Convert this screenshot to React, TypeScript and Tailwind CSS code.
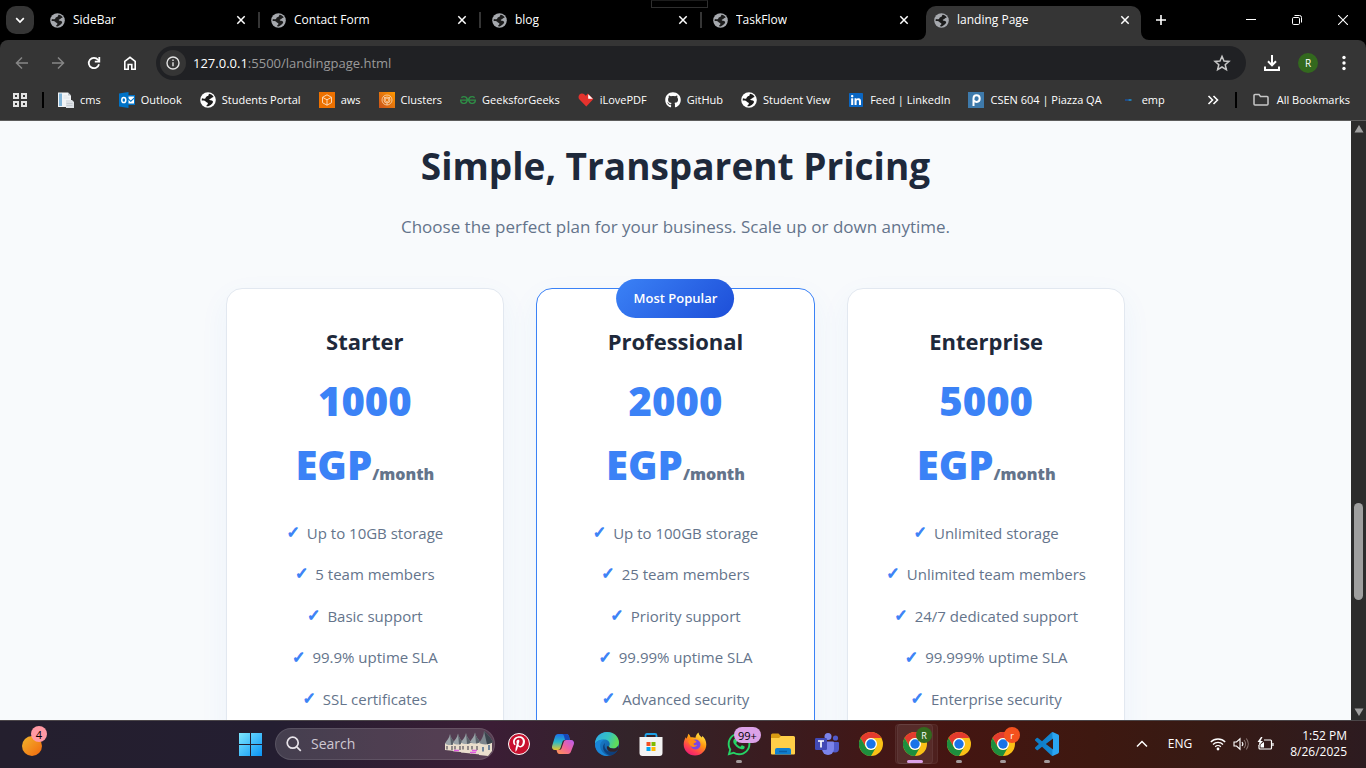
import React from "react";
import { FaGithub, FaLinkedin, FaPinterestP, FaWhatsapp } from "react-icons/fa";
import { SiGeeksforgeeks } from "react-icons/si";

type IconProps = { className?: string };

/* ---------- shared glyphs ---------- */

function Globe({ className }: IconProps) {
  return (
    <svg viewBox="0 0 16 16" className={className} aria-hidden="true">
      <circle cx="8" cy="8" r="7.8" fill="currentColor" />
      <path
        className="fill-[#1c1c1c]"
        d="M9.300 1.800c1.900.3 3.500 1.500 4.300 3.100-1.200.1-1.700.6-2.300 1.300-.4.600-1.300.5-1.900 1.100-.3.400.1.900.7.900 1.200 0 2.200.1 2.700 1 .4.700 0 1.500-.6 2.200-.9 1-2 1.900-3.500 2.700-.9.300-1.700.200-2.200.1-.2-.7.4-1.300 1-1.700.7-.5.5-1.500-.300-1.900-1-.4-1.500-.9-2-1.600-.7-.5-2-.5-3.500-.6 0-.8.100-1.500.3-2.100 1.300.6 2.500.6 3.300.100.5-.4.3-1.200.9-1.700.7-.5 1.700-.3 2.100-1 .3-.6.1-1.400 1-1.900z"
      />
    </svg>
  );
}

function Close({ className }: IconProps) {
  return (
    <svg viewBox="0 0 10 10" className={className} fill="none" stroke="currentColor" strokeWidth="1.5" aria-hidden="true">
      <path d="M1.300 1.300l7.400 7.400M8.700 1.300L1.300 8.700" />
    </svg>
  );
}

/* ---------- bookmark icons ---------- */

function CmsIcon() {
  return (
    <svg viewBox="0 0 16 16" className="size-4" aria-hidden="true">
      <path d="M0 .5h10l3 3V15H0z" fill="#f2f4f6" />
      <path d="M1 1.500h3V14H1z" fill="#7fb2d6" />
      <path d="M10 .5v3h3z" fill="#b9c0c7" />
      <path d="M5.500 4h4M5.500 6h6" stroke="#dfe3e7" />
      <path d="M8 8h6l2 2v6H8z" fill="#dde1e5" />
      <path d="M8.500 11.500h6M8.500 13.500h6" stroke="#c5cbd1" />
    </svg>
  );
}

function OutlookIcon() {
  return (
    <svg viewBox="0 0 16 16" className="size-4" aria-hidden="true">
      <path d="M8 3h8v10H8z" fill="#0072c6" />
      <path d="M9 4.500h6v1L11.800 8.500 9 6z" fill="#fff" />
      <path d="M9 7.500l2.800 2.500L15 7v4.500H9z" fill="#fff" />
      <path d="M0 1.500L9.500 0v16L0 14.500z" fill="#0072c6" />
      <ellipse cx="4.800" cy="8" rx="2" ry="2.600" fill="none" stroke="#fff" strokeWidth="1.500" />
    </svg>
  );
}

function AwsIcon() {
  return (
    <svg viewBox="0 0 16 16" className="size-4" fill="none" stroke="#ffe3c7" strokeWidth=".9" aria-hidden="true">
      <path d="M0 0h16v16H0z" fill="#ed7100" stroke="none" />
      <path d="M8 2.800l4.500 2.500v5.400L8 13.200l-4.500-2.500V5.300zM3.500 5.300L8 7.800l4.500-2.500M8 7.800v5.400" />
    </svg>
  );
}

function ClustersIcon() {
  return (
    <svg viewBox="0 0 16 16" className="size-4" fill="none" stroke="#ffe3c7" strokeWidth=".7" aria-hidden="true">
      <defs>
        <linearGradient id="clusters" x1="0" y1="1" x2="1" y2="0">
          <stop stopColor="#c8511b" />
          <stop offset="1" stopColor="#ff9900" />
        </linearGradient>
      </defs>
      <path d="M0 0h16v16H0z" fill="url(#clusters)" stroke="none" />
      <circle cx="8" cy="8" r="5" />
      <circle cx="8" cy="8" r="3" />
      <path d="M4.500 4.500l2 2M11.500 4.500l-2 2M8 13v-2.500M8 6l1.800 1v2L8 10 6.200 9V7z" />
    </svg>
  );
}

function HeartIcon() {
  return (
    <svg viewBox="0 0 16 16" className="size-4" aria-hidden="true">
      <path d="M8.300 14.500L1.500 7.600C.2 6.200.2 3.900 1.500 2.500s3.600-1.400 5 0l1.300 1.200 2-2.300 5.600 5.600z" fill="#e5322d" />
      <path d="M10.200 2.300l4.600 4.500h-4.600z" fill="#fff" />
    </svg>
  );
}

function PiazzaIcon() {
  return (
    <svg viewBox="0 0 16 16" className="size-4" aria-hidden="true">
      <path d="M0 0h16v16H0z" fill="#3e7aab" />
      <path d="M5.500 14V6.500C5.500 4.500 6.700 3.200 8.500 3.200s3.200 1.400 3.200 3.300-1.300 3.400-3 3.400c-1.200 0-2-.5-2.600-1.200" fill="none" stroke="#fff" strokeWidth="2" />
    </svg>
  );
}

function DashIcon() {
  return (
    <svg viewBox="0 0 16 16" className="size-4" aria-hidden="true">
      <path d="M5 8h3.500" stroke="#1d4f9c" strokeWidth="1.600" />
      <path d="M8.500 8h3" stroke="#1f8fd0" strokeWidth="1.600" />
    </svg>
  );
}

function LinkedInIcon() {
  return (
    <span className="flex size-4 items-center justify-center bg-[linear-gradient(#fff,#fff)] bg-[length:10px_10px] bg-center bg-no-repeat">
      <FaLinkedin className="size-4 text-[#0a66c2]" />
    </span>
  );
}

const bookmarks: { label: string; icon: React.ReactNode }[] = [
  { label: "cms", icon: <CmsIcon /> },
  { label: "Outlook", icon: <OutlookIcon /> },
  { label: "Students Portal", icon: <Globe className="size-4 text-white" /> },
  { label: "aws", icon: <AwsIcon /> },
  { label: "Clusters", icon: <ClustersIcon /> },
  { label: "GeeksforGeeks", icon: <SiGeeksforgeeks className="size-4 text-[#2f8d46]" /> },
  { label: "iLovePDF", icon: <HeartIcon /> },
  { label: "GitHub", icon: <FaGithub className="size-4 text-white" /> },
  { label: "Student View", icon: <Globe className="size-4 text-white" /> },
  { label: "Feed | LinkedIn", icon: <LinkedInIcon /> },
  { label: "CSEN 604 | Piazza QA", icon: <PiazzaIcon /> },
  { label: "emp", icon: <DashIcon /> },
];

/* ---------- browser window ---------- */

const tabs = ["SideBar", "Contact Form", "blog", "TaskFlow", "landing Page"];

function TabStrip() {
  return (
    <div className="relative flex h-10 items-end bg-black pl-[6px] text-white">
      <div className="absolute top-0 left-[651px] h-2 w-[57px] border border-[#2f2f2f] border-t-[#1c1c1c]" />
      <button type="button" aria-label="Search tabs" className="mb-[6px] flex size-7 shrink-0 items-center justify-center rounded-[10px] bg-[#353535]">
        <svg viewBox="0 0 10 10" className="size-[10px]" fill="none" stroke="#fff" strokeWidth="1.700" aria-hidden="true">
          <path d="M1.200 3.200L5 7l3.800-3.800" />
        </svg>
      </button>
      <div role="tablist" aria-label="Open tabs" className="ml-2 flex min-w-0">
        {tabs.map((label, i) => {
          const active = i === tabs.length - 1;
          return (
            <div key={label} className="relative flex h-[34px] w-[221px] min-w-0 pr-[6px]">
              {active && (
                <svg viewBox="0 0 8 8" className="absolute bottom-0 -left-2 size-2 fill-[#353535]" aria-hidden="true">
                  <path d="M8 0v8H0a8 8 0 0 0 8-8z" />
                </svg>
              )}
              <div className={active ? "flex flex-1 items-center rounded-t-[10px] bg-[#353535] pr-[11px] pb-[6px] pl-2" : "flex flex-1 items-center pr-[11px] pb-[6px] pl-2"}>
                <button type="button" role="tab" aria-selected={active} className="flex min-w-0 flex-1 items-center gap-2 text-left">
                  <Globe className="size-[15px] shrink-0 text-[#a6a9ae]" />
                  <span className="truncate text-xs leading-4">{label}</span>
                </button>
                <button type="button" aria-label={`Close ${label}`} className="flex size-[10px] items-center justify-center">
                  <Close className="size-[10px]" />
                </button>
              </div>
              {active && (
                <svg viewBox="0 0 8 8" className="absolute right-[-2px] bottom-0 size-2 fill-[#353535]" aria-hidden="true">
                  <path d="M0 0v8h8a8 8 0 0 1-8-8z" />
                </svg>
              )}
              {i < tabs.length - 2 && <div className="absolute top-[6px] right-[3px] h-4 w-[2px] bg-[#353535]" />}
            </div>
          );
        })}
      </div>
      <button type="button" aria-label="New tab" className="mb-[6px] flex size-7 shrink-0 items-center justify-center">
        <svg viewBox="0 0 12 12" className="size-3" fill="none" stroke="#fff" strokeWidth="1.600" aria-hidden="true">
          <path d="M6 1v10M1 6h10" />
        </svg>
      </button>
      <div className="ml-auto flex h-10 items-center">
        <button type="button" aria-label="Minimize" className="flex h-10 w-[46px] items-center justify-center">
          <svg viewBox="0 0 10 10" className="size-[10px]" stroke="#fff" aria-hidden="true">
            <path d="M0 4.500h10" />
          </svg>
        </button>
        <button type="button" aria-label="Restore" className="flex h-10 w-[46px] items-center justify-center">
          <svg viewBox="0 0 10 10" className="size-[10px]" fill="none" stroke="#fff" aria-hidden="true">
            <rect x=".5" y="2.500" width="7" height="7" rx="1.200" />
            <path d="M2.500 .5h5a2 2 0 0 1 2 2v5" />
          </svg>
        </button>
        <button type="button" aria-label="Close window" className="flex h-10 w-[46px] items-center justify-center">
          <svg viewBox="0 0 10 10" className="size-[10px]" stroke="#fff" strokeWidth="1.100" aria-hidden="true">
            <path d="M0 0l10 10M10 0L0 10" />
          </svg>
        </button>
      </div>
    </div>
  );
}

function NavButton({ label, children }: { label: string; children: React.ReactNode }) {
  return (
    <button type="button" aria-label={label} className="flex h-[34px] w-9 shrink-0 items-center justify-center">
      {children}
    </button>
  );
}

function Toolbar() {
  return (
    <div className="bg-black">
      <div className="flex rounded-t-lg bg-[#353535] px-1 pt-[6px]">
        <NavButton label="Back">
          <svg viewBox="0 0 16 16" className="size-4" fill="none" stroke="#868686" strokeWidth="1.500" aria-hidden="true">
            <path d="M14 8H3M8 2.500L2.500 8 8 13.500" />
          </svg>
        </NavButton>
        <NavButton label="Forward">
          <svg viewBox="0 0 16 16" className="size-4" fill="none" stroke="#868686" strokeWidth="1.500" aria-hidden="true">
            <path d="M2 8h11M8 2.500L13.500 8 8 13.500" />
          </svg>
        </NavButton>
        <NavButton label="Reload">
          <svg viewBox="0 0 16 16" className="size-4" fill="none" stroke="#fff" strokeWidth="1.800" aria-hidden="true">
            <path d="M13 9.300A5.200 5.200 0 1 1 12 4.700L13 6" />
            <path d="M13.300 2v4.600H8.800" />
          </svg>
        </NavButton>
        <NavButton label="Home">
          <svg viewBox="0 0 16 16" className="size-4" fill="none" stroke="#fff" strokeWidth="1.600" aria-hidden="true">
            <path d="M2.800 6.300L8 2.300l5.200 4v8H9.800V9.500H6.200v4.800H2.800z" />
          </svg>
        </NavButton>
        <form className="mx-2 flex h-[34px] flex-1 items-center rounded-full bg-[#202124] pr-[15px] pl-1" onSubmit={(e) => e.preventDefault()}>
          <button type="button" aria-label="Site information" className="flex size-[26px] items-center justify-center rounded-full bg-[#353535]">
            <svg viewBox="0 0 14 14" className="size-[14px]" fill="none" stroke="#e3e3e3" strokeWidth="1.400" aria-hidden="true">
              <circle cx="7" cy="7" r="6" />
              <path d="M7 6.200v4M7 3.600v1.500" />
            </svg>
          </button>
          <button type="button" aria-label="Address" className="flex-1 cursor-text pl-[7px] text-left text-[13px] leading-5 text-[#9a9a9a]">
            <span className="text-white">127.0.0.1</span>:5500/landingpage.html
          </button>
          <button type="button" aria-label="Bookmark this page">
            <svg viewBox="0 0 18 18" className="size-[18px]" fill="none" stroke="#c7c7c7" strokeWidth="1.500" aria-hidden="true">
              <path d="M9 2.300l2 4.700 5 .4-3.800 3.300 1.200 5L9 13l-4.400 2.700 1.200-5L2 7.400 7 7z" />
            </svg>
          </button>
        </form>
        <NavButton label="Downloads">
          <svg viewBox="0 0 16 16" className="size-4" fill="none" stroke="#fff" strokeWidth="2" aria-hidden="true">
            <path d="M8 0v10M4 6.300l4 4 4-4M1 11.500V15h14v-3.500" />
          </svg>
        </NavButton>
        <NavButton label="Profile">
          <span className="flex size-5 items-center justify-center rounded-full bg-[#33691e] text-[10px] leading-none text-white">R</span>
        </NavButton>
        <NavButton label="Menu">
          <svg viewBox="0 0 4 16" className="h-4 w-1" fill="#fff" aria-hidden="true">
            <circle cx="2" cy="2.500" r="1.700" />
            <circle cx="2" cy="8" r="1.700" />
            <circle cx="2" cy="13.500" r="1.700" />
          </svg>
        </NavButton>
      </div>
    </div>
  );
}

function BookmarkBar() {
  return (
    <nav aria-label="Bookmarks" className="flex h-[41px] items-center border-b border-[#5c5c5c] bg-[#353535] pr-4 pl-3 text-[11px] leading-4 text-white">
      <button type="button" aria-label="Apps">
        <svg viewBox="0 0 16 16" className="size-4" fill="none" stroke="#e3e3e3" strokeWidth="2" aria-hidden="true">
          <path d="M2 2h4v4H2zM10 2h4v4h-4zM2 10h4v4H2zM10 10h4v4h-4z" />
        </svg>
      </button>
      <div className="mx-[14px] h-4 w-[2px] bg-black" />
      <ul className="flex min-w-0 gap-[18px]">
        {bookmarks.map((b) => (
          <li key={b.label} className="shrink-0">
            <a href="#" className="flex items-center gap-[6px] whitespace-nowrap">
              {b.icon}
              {b.label}
            </a>
          </li>
        ))}
      </ul>
      <div className="ml-auto flex shrink-0 items-center">
        <button type="button" aria-label="More bookmarks">
          <svg viewBox="0 0 12 12" className="size-3" fill="none" stroke="#fff" strokeWidth="1.600" aria-hidden="true">
            <path d="M1.500 2l4 4-4 4M6.500 2l4 4-4 4" />
          </svg>
        </button>
        <div className="mr-4 ml-4 h-4 w-[2px] bg-black" />
        <a href="#" className="flex items-center gap-2">
          <svg viewBox="0 0 16 14" className="h-[14px] w-4" fill="none" stroke="#c7c7c7" strokeWidth="1.500" aria-hidden="true">
            <path d="M1 2.500a1 1 0 0 1 1-1h4L7.500 3.500H14a1 1 0 0 1 1 1V11a1 1 0 0 1-1 1H2a1 1 0 0 1-1-1z" />
          </svg>
          All Bookmarks
        </a>
      </div>
    </nav>
  );
}

/* ---------- pricing page ---------- */

const plans = [
  { name: "Starter", price: "1000", features: ["Up to 10GB storage", "5 team members", "Basic support", "99.9% uptime SLA", "SSL certificates"] },
  { name: "Professional", price: "2000", popular: true, features: ["Up to 100GB storage", "25 team members", "Priority support", "99.99% uptime SLA", "Advanced security"] },
  { name: "Enterprise", price: "5000", features: ["Unlimited storage", "Unlimited team members", "24/7 dedicated support", "99.999% uptime SLA", "Enterprise security"] },
];

function PlanCard({ name, price, popular, features }: { name: string; price: string; popular?: boolean; features: string[] }) {
  return (
    <article
      className={
        popular
          ? "relative rounded-[16px] border border-[#3b82f6] bg-white px-8 pt-8 pb-12 text-center shadow-[0_10px_30px_rgba(59,130,246,0.06)]"
          : "relative rounded-[16px] border border-[#e2e8f0] bg-white px-8 pt-8 pb-12 text-center shadow-[0_10px_30px_rgba(59,130,246,0.06)]"
      }
    >
      {popular && (
        <div className="absolute -top-[10px] left-1/2 flex h-[39px] -translate-x-1/2 items-center rounded-[20px] bg-[linear-gradient(135deg,#3b82f6,#1d4ed8)] px-[17px] text-[13px] font-semibold whitespace-nowrap text-white">
          Most Popular
        </div>
      )}
      <h2 className="text-[22px] leading-[40px] font-bold text-[#1e293b]">{name}</h2>
      <p className="mt-2 text-[40px] leading-[64px] font-extrabold text-[#3b82f6]">
        {price}
        <br />
        EGP<span className="text-base text-[#64748b]">/month</span>
      </p>
      <ul className="mt-[15px] grid h-52 grid-rows-5">
        {features.map((f) => (
          <li key={f} className="flex items-center justify-center gap-[7px] text-[15px] text-[#64748b]">
            <span className="font-['DejaVu_Sans',sans-serif] text-base font-bold text-[#3b82f6] [-webkit-text-stroke:1px_#3b82f6]">✓</span>
            {f}
          </li>
        ))}
      </ul>
    </article>
  );
}

function PricingPage() {
  return (
    <main className="flex-1 overflow-hidden bg-[#f8fafc] px-6 pt-[13px]">
      <h1 className="text-center text-[37px] leading-[64px] font-bold text-[#1e293b]">Simple, Transparent Pricing</h1>
      <p className="mt-[14px] mb-[47px] text-center text-[17px] leading-[29px] text-[#64748b]">
        Choose the perfect plan for your business. Scale up or down anytime.
      </p>
      <section aria-label="Plans" className="mx-auto grid max-w-[900px] grid-cols-3 gap-8">
        {plans.map((p) => (
          <PlanCard key={p.name} {...p} />
        ))}
      </section>
    </main>
  );
}

function Scrollbar() {
  return (
    <div aria-hidden="true" className="flex w-[15px] shrink-0 flex-col items-center bg-[#2c2c2c] py-1">
      <svg viewBox="0 0 10 8" className="h-2 w-[10px] fill-[#9f9f9f]">
        <path d="M5 0l4.500 7.500H.5z" />
      </svg>
      <div className="flex-[370]" />
      <div className="w-[9px] flex-[97] rounded-full bg-[#9f9f9f]" />
      <div className="flex-[108]" />
      <svg viewBox="0 0 10 8" className="h-2 w-[10px] fill-[#9f9f9f]">
        <path d="M5 8L.5.500h9z" />
      </svg>
    </div>
  );
}

/* ---------- taskbar ---------- */

function WindowsLogo() {
  return (
    <svg viewBox="0 0 23 23" className="size-[23px]" aria-hidden="true">
      <defs>
        <linearGradient id="win" x1="0" y1="0" x2="1" y2="1">
          <stop stopColor="#7ee8ff" />
          <stop offset="1" stopColor="#0a93f5" />
        </linearGradient>
      </defs>
      <path d="M0 0h11v11H0zM12 0h11v11H12zM0 12h11v11H0zM12 12h11v11H12z" fill="url(#win)" />
    </svg>
  );
}

/* Row of small towers with slate roofs, largest one at the right. */
function Castle() {
  const towers = [0, 8, 16, 25];
  return (
    <svg viewBox="0 0 50 26" className="h-[26px] w-[50px]" aria-hidden="true">
      {towers.map((x, i) => (
        <g key={x}>
          <path d={`M${x + 1} 12h10v${8 + i * 1.2}l-10-1z`} fill="#eadfcd" />
          <path d={`M${x + 6} ${3 - i * 0.5}c.6 4 3 6 5 9.500-3 2-7 2-10 0 2-3.500 4.400-5.500 5-9.500z`} fill="#9aa3a8" />
          <path d={`M${x + 6} ${3 - i * 0.5}c.6 4 3 6 5 9.500-1 .8-2.500 1.200-4 1.400z`} fill="#596169" />
          <path d={`M${x + 3} 15v3.500M${x + 8} 15v4`} stroke="#55525c" strokeWidth="1.200" />
        </g>
      ))}
      <path d="M35 11h13v9l-4 5-9-1z" fill="#eadfcd" />
      <path d="M40 0c2 2 7 6 9 11-4 3-10 3-14 1 3-4 5-8 5-12z" fill="#7c858c" />
      <path d="M40 0c2 2 7 6 9 11-2 1.500-4 2-6 2.200z" fill="#3b444d" />
      <path d="M39 16v4.500M45 14v5" stroke="#4a6a8c" strokeWidth="1.500" />
      <path d="M10 19.500h5M26 21.500h6M28 19.500h5" stroke="#e05be0" strokeWidth="1.600" />
    </svg>
  );
}

function Copilot() {
  return (
    <svg viewBox="0 0 24 24" className="size-6" aria-hidden="true">
      <defs>
        <linearGradient id="cpA" x1="0" y1="0" x2="0" y2="1">
          <stop stopColor="#1c6fe8" />
          <stop offset=".5" stopColor="#29b8c8" />
          <stop offset="1" stopColor="#e9c52c" />
        </linearGradient>
        <linearGradient id="cpB" x1="1" y1="0" x2="0" y2="1">
          <stop stopColor="#b65cf2" />
          <stop offset=".5" stopColor="#f0639b" />
          <stop offset="1" stopColor="#ff9a4d" />
        </linearGradient>
      </defs>
      <path d="M7 2h8.500c1.300 0 2 .8 2.400 2l.9 4H14c-1.500 0-2.300.8-2.700 2.200L9.500 16c-.4 1.300-1.200 2-2.500 2H4c-2.300 0-3.500-1.700-2.900-4L4 4.500c.5-1.600 1.500-2.500 3-2.500z" fill="url(#cpA)" />
      <path d="M15 2c1.500 0 2.500.7 3 2l.8 4H14l-1-4C12.700 2.700 12 2 11 2z" fill="#1647b8" />
      <path d="M17 22H8.500c-1.300 0-2-.8-2.400-2l-.6-2H8c1.500 0 2.300-.8 2.700-2.200L12.700 10c.4-1.300 1.200-2 2.500-2H20c2.300 0 3.500 1.700 2.900 4L20 19.500c-.5 1.600-1.500 2.500-3 2.500z" fill="url(#cpB)" />
    </svg>
  );
}

function Edge() {
  return (
    <svg viewBox="0 0 24 24" className="size-6" aria-hidden="true">
      <defs>
        <linearGradient id="edA" x1="0" y1="0" x2="1" y2=".3">
          <stop stopColor="#2fa8ea" />
          <stop offset=".6" stopColor="#35c3c0" />
          <stop offset="1" stopColor="#5fdc5a" />
        </linearGradient>
        <linearGradient id="edB" x1="0" y1="0" x2="1" y2="1">
          <stop stopColor="#1b8fe0" />
          <stop offset="1" stopColor="#114a8b" />
        </linearGradient>
      </defs>
      <circle cx="12" cy="12" r="12" fill="url(#edB)" />
      <path d="M0 11.500C.3 5 5.500 0 12 0c7 0 12 4.800 12 10.500 0 3.600-2.600 6-6 6-2.600 0-4.200-.8-4.200-1.900 0-.7.900-1.100.9-2.700 0-2.300-2.200-4.300-5.700-4.300C5 7.600 1.500 9 0 11.500z" fill="url(#edA)" />
      <path d="M9 7.800c-3.500 1.700-4.500 5-3.600 8.300 1 3.600 4.200 6.600 8.400 7.700-6.800 1.200-13.300-3.800-13.800-11C1 9.300 5 7.500 9 7.800z" fill="#1a86d8" />
      <path d="M10 11c-1.500 3.800.5 8.300 5.600 8.700 3 .2 5.200-1 6.800-2.200.4-.2.600.1.400.500-1.200 2.200-3 4-5.400 5-4.500.8-9-3-9.300-7.200-.1-2 .6-3.800 1.900-4.800z" fill="#0d3f7c" />
      <path d="M14 14.500c0 1.200 1.700 2 4.200 2 2 0 4-1 4.800-2.600v3.500c-2 2.200-5 2.800-7.400 2.300-2.500-.5-4.200-3-3.600-5.500z" fill="#32242a" />
    </svg>
  );
}

function Store() {
  return (
    <svg viewBox="0 0 24 24" className="size-6" aria-hidden="true">
      <path d="M6.500 7V3.500c0-1 .5-1.500 1.500-1.500h8c1 0 1.500.5 1.500 1.500V7" fill="none" stroke="#1da1e6" strokeWidth="1.800" />
      <path d="M.5 5h23v16a3 3 0 0 1-3 3h-17a3 3 0 0 1-3-3z" fill="#f3f3f3" />
      <path d="M7.500 10h4v4h-4z" fill="#f25022" />
      <path d="M12.500 10h4v4h-4z" fill="#7fba00" />
      <path d="M7.500 15h4v4h-4z" fill="#00a4ef" />
      <path d="M12.500 15h4v4h-4z" fill="#ffb900" />
    </svg>
  );
}

function Firefox() {
  return (
    <svg viewBox="0 0 24 24" className="size-6" aria-hidden="true">
      <defs>
        <linearGradient id="ff" x1=".8" y1="0" x2=".2" y2="1">
          <stop stopColor="#fff14f" />
          <stop offset=".4" stopColor="#ff980e" />
          <stop offset=".75" stopColor="#ff3d54" />
          <stop offset="1" stopColor="#e9157a" />
        </linearGradient>
      </defs>
      <path d="M15.500.5c.3 2.500 2 3.600 3.300 5 .4-.5.400-1 .3-1.700 2.600 2 4.200 5.300 4.200 8.700C23.300 18.800 18.200 23.500 12 23.500S.7 18.600.7 12.500c0-3 .9-5.500 2.300-7.500 0 .8.100 1.300.3 1.800C4.500 5 5 3.600 5.200 1.800 6.500 2.600 7.300 4 7.500 5.300c1.800-.2 3.800-.1 5 .5.200-2.300 1.400-4.300 3-5.300z" fill="url(#ff)" />
      <circle cx="12.500" cy="12.500" r="5" fill="#7a45e5" />
      <path d="M5 9.500c1.500-2 4.500-2.600 6.500-1.200 1 .3 1.800.9 2 1.600-.8.900-2.800.8-3 2 .4 1.600 2.400 1.500 3.600.8-.8 2.300-4.300 3-6.300 1.300C6.500 12.800 6 11 5 9.500z" fill="#ff8a16" />
    </svg>
  );
}

function Explorer() {
  return (
    <svg viewBox="0 0 24 24" className="size-6" aria-hidden="true">
      <path d="M0 3a1.500 1.500 0 0 1 1.500-1.500h6L10 4v4H0z" fill="#d99b12" />
      <path d="M0 6h8l2-2h12.500A1.500 1.500 0 0 1 24 5.500v16a1 1 0 0 1-1 1H1a1 1 0 0 1-1-1z" fill="#ffcf48" />
      <path d="M4 22.500V18a2 2 0 0 1 2-2h12a2 2 0 0 1 2 2v4.500z" fill="#0f7fd0" />
      <path d="M8 19.500h8" stroke="#0a5ea6" strokeWidth="1.500" />
    </svg>
  );
}

function Teams() {
  return (
    <svg viewBox="0 0 24 24" className="size-6" aria-hidden="true">
      <circle cx="20.500" cy="6" r="2.600" fill="#5059c9" />
      <circle cx="13" cy="4.500" r="3.500" fill="#7b83eb" />
      <path d="M16 10h7a1 1 0 0 1 1 1v5.500a4 4 0 0 1-8 0z" fill="#5059c9" />
      <path d="M7 9.500h11a1 1 0 0 1 1 1v6.500a6 6 0 0 1-12 0z" fill="#7b83eb" />
      <rect y="6" width="12" height="12" rx="1.200" fill="#4149b5" />
      <path d="M3 9h6M6 9v6.500" stroke="#fff" strokeWidth="1.700" />
    </svg>
  );
}

function Chrome() {
  return (
    <svg viewBox="0 0 24 24" className="size-6" aria-hidden="true">
      <circle cx="12" cy="12" r="12" fill="#fbc116" />
      <path d="M1.600 6a12 12 0 0 1 20.800 0H12a6 6 0 0 0-5.200 9z" fill="#e33b2e" />
      <path d="M1.600 6a12 12 0 0 0 10.400 18l5.200-9A6 6 0 0 1 6.800 15z" fill="#1e8e3e" />
      <circle cx="12" cy="12" r="6" fill="#fff" />
      <circle cx="12" cy="12" r="4.700" fill="#1a73e8" />
    </svg>
  );
}

function VsCode() {
  return (
    <svg viewBox="0 0 24 24" className="size-6" aria-hidden="true">
      <defs>
        <linearGradient id="vsc">
          <stop stopColor="#0d7bc4" />
          <stop offset=".7" stopColor="#1387d2" />
          <stop offset=".75" stopColor="#2aa5f2" />
        </linearGradient>
      </defs>
      <path
        fill="url(#vsc)"
        d="M23.150 2.587L18.210.210a1.494 1.494 0 0 0-1.705.290l-9.460 8.630-4.120-3.128a.999.999 0 0 0-1.276.057L.327 7.261A1 1 0 0 0 .326 8.740L3.899 12 .326 15.260a1 1 0 0 0 .001 1.479L1.650 17.940a.999.999 0 0 0 1.276.057l4.120-3.128 9.460 8.630a1.492 1.492 0 0 0 1.704.290l4.942-2.377A1.500 1.500 0 0 0 24 20.060V3.939a1.500 1.500 0 0 0-.850-1.352zm-5.146 14.861L10.826 12l7.178-5.448v10.896z"
      />
    </svg>
  );
}

function Pinterest() {
  return (
    <span className="flex size-[22px] items-center justify-center rounded-full border border-white bg-[#c8102e]">
      <FaPinterestP className="size-4 text-white" />
    </span>
  );
}

type TaskbarApp = { name: string; icon: React.ReactNode; running?: boolean; active?: boolean; badge?: React.ReactNode };

const apps: TaskbarApp[] = [
  { name: "Pinterest", icon: <Pinterest /> },
  { name: "Copilot", icon: <Copilot /> },
  { name: "Edge", icon: <Edge /> },
  { name: "Store", icon: <Store /> },
  { name: "Firefox", icon: <Firefox /> },
  {
    name: "WhatsApp",
    icon: <FaWhatsapp className="size-[26px] text-[#25d366]" />,
    running: true,
    badge: <span className="absolute top-[5px] left-[17px] flex h-4 items-center rounded-full bg-[#dca2e8] px-1 text-[11px] leading-none text-black">99+</span>,
  },
  { name: "File Explorer", icon: <Explorer /> },
  { name: "Teams", icon: <Teams /> },
  { name: "Chrome", icon: <Chrome /> },
  {
    name: "Chrome, profile R",
    icon: <Chrome />,
    active: true,
    badge: <span className="absolute top-[5px] left-[23px] flex size-4 items-center justify-center rounded-full bg-[#33691e] text-[9px] leading-none text-white">R</span>,
  },
  { name: "Chrome, second window", icon: <Chrome />, running: true },
  {
    name: "Chrome, profile r",
    icon: <Chrome />,
    running: true,
    badge: <span className="absolute top-[5px] left-[23px] flex size-4 items-center justify-center rounded-full bg-[#f4511e] text-[9px] leading-none text-white">r</span>,
  },
  { name: "Visual Studio Code", icon: <VsCode />, running: true },
];

function Taskbar() {
  return (
    <footer className="flex h-12 shrink-0 items-center border-t border-[#4b4649] bg-[linear-gradient(90deg,#241f2e_0%,#241e31_20%,#3b1d35_36%,#33242a_46%,#3a1c20_56%,#451512_68%,#3e1810_80%,#371a14_88%,#2d1b20_100%)] pb-px text-white">
      <div className="w-[228px]">
        <button type="button" aria-label="Widgets" className="relative ml-[22px] block h-9 w-[26px]">
          <span className="absolute top-[10px] left-0 size-5 rounded-full bg-linear-135 from-[#f0b52c] to-[#f0640c]" />
          <span className="absolute top-0 left-[9px] flex size-4 items-center justify-center rounded-full bg-[#ff99a4] text-[11px] leading-none text-black">4</span>
        </button>
      </div>
      <button type="button" aria-label="Start" className="flex h-11 w-11 items-center justify-center">
        <WindowsLogo />
      </button>
      <label className="mr-[2px] ml-[3px] flex h-8 w-[220px] items-center rounded-full border border-white/10 bg-white/15 pl-[10px]">
        <svg viewBox="0 0 16 16" className="size-4 shrink-0" fill="none" stroke="#e8e4ea" strokeWidth="1.700" aria-hidden="true">
          <circle cx="6.700" cy="6.700" r="5.500" />
          <path d="M10.800 10.800l4 4" />
        </svg>
        <input type="search" aria-label="Search" placeholder="Search" className="ml-[9px] w-0 flex-1 bg-transparent text-sm placeholder:text-[#cfc8d2] focus:outline-none" />
        <Castle />
      </label>
      <ul className="flex">
        {apps.map((a) => (
          <li key={a.name}>
            <button type="button" aria-label={a.name} className="relative flex h-11 w-11 items-center justify-center">
              {a.active && (
                <>
                  <span className="absolute inset-y-[2px] right-[-1px] left-1 rounded border border-white/5 bg-white/5" />
                  <span className="absolute inset-y-[2px] right-1 left-[2px] rounded border border-white/5 bg-white/5" />
                </>
              )}
              <span className="relative">{a.icon}</span>
              {a.badge}
              {a.running && <span className="absolute bottom-[3px] h-[3px] w-[6px] rounded-full bg-[#a39a9b]" />}
              {a.active && <span className="absolute bottom-[3px] h-[3px] w-4 rounded-full bg-[#dca2e8]" />}
            </button>
          </li>
        ))}
      </ul>
      <div className="ml-auto flex items-center pr-[19px] text-xs leading-4">
        <button type="button" aria-label="Show hidden icons" className="mr-5">
          <svg viewBox="0 0 12 12" className="size-3" fill="none" stroke="#fff" strokeWidth="1.500" aria-hidden="true">
            <path d="M1 8.500l5-5 5 5" />
          </svg>
        </button>
        <button type="button" className="mr-[18px]">ENG</button>
        <button type="button" aria-label="Network, volume and battery" className="mr-4 flex items-center gap-[7px]">
          <svg viewBox="0 0 16 14" className="h-[14px] w-4" fill="none" stroke="#fff" strokeWidth="1.300" aria-hidden="true">
            <path d="M.8 5a10.200 10.200 0 0 1 14.400 0M3 7.500a7 7 0 0 1 10 0M5.200 9.800a4 4 0 0 1 5.600 0" />
            <circle cx="8" cy="12" r="1.400" fill="#fff" stroke="none" />
          </svg>
          <svg viewBox="0 0 17 14" className="h-[14px] w-[17px]" fill="none" stroke="#fff" strokeWidth="1.100" aria-hidden="true">
            <path d="M1 5h2.500L7 1.800v10.400L3.500 9H1z" />
            <path d="M9 5a3 3 0 0 1 0 4" />
            <path d="M11 3a6 6 0 0 1 0 8M13.300 1.500a9 9 0 0 1 0 11" stroke="#8a7773" />
          </svg>
          <svg viewBox="0 0 17 14" className="h-[14px] w-[17px]" fill="none" stroke="#fff" strokeWidth="1.200" aria-hidden="true">
            <path d="M7 3h6.500a1 1 0 0 1 1 1v7a1 1 0 0 1-1 1H3a1 1 0 0 1-1-1V8M16 6v3" />
            <path d="M4 0L.5 5h2L1.500 9 6 4H3.500L5.500 0zM3.500 7.500L7 5v5.500H3.500z" fill="#fff" stroke="none" />
          </svg>
        </button>
        <button type="button" className="text-right">
          1:52 PM
          <br />
          8/26/2025
        </button>
      </div>
    </footer>
  );
}

export default function App() {
  return (
    <div className="flex h-screen flex-col overflow-hidden bg-black font-['Open_Sans','Noto_Sans',sans-serif]">
      <TabStrip />
      <Toolbar />
      <BookmarkBar />
      <div className="flex min-h-0 flex-1">
        <PricingPage />
        <Scrollbar />
      </div>
      <Taskbar />
    </div>
  );
}
